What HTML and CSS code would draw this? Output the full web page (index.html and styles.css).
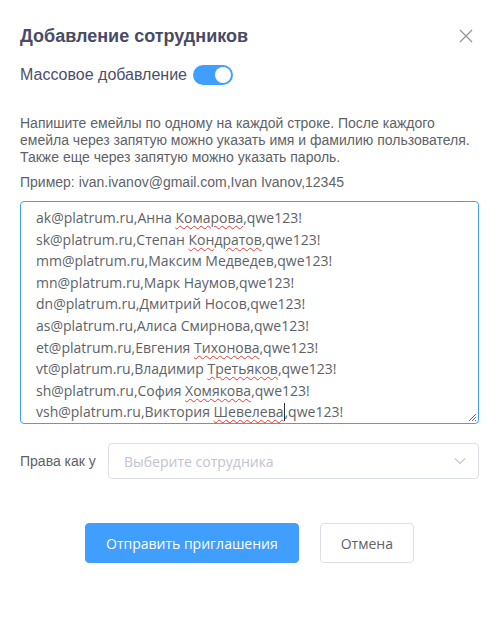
FILE: index.html
```html
<!DOCTYPE html>
<html lang="ru">
<head>
<meta charset="utf-8">
<link rel="stylesheet" href="styles.css">
</head>
<body>
<div class="dialog">
  <div class="header">
    <h2 class="title">Добавление сотрудников</h2>
    <svg class="close" width="14" height="14" viewBox="0 0 14 14"><path d="M1 1L13 13M13 1L1 13" stroke="#909399" stroke-width="1.2" fill="none"/></svg>
  </div>
  <div class="mass">
    <span>Массовое добавление</span>
    <span class="switch"><span class="knob"></span></span>
  </div>
  <p class="hint">Напишите емейлы по одному на каждой строке. После каждого емейла через запятую можно указать имя и фамилию пользователя. Также еще через запятую можно указать пароль.</p>
  <p class="example">Пример: ivan.ivanov@gmail.com,Ivan Ivanov,12345</p>
  <div class="textarea">
    <div>ak@platrum.ru,Анна <span class="sp">Комарова</span>,qwe123!</div>
    <div>sk@platrum.ru,Степан <span class="sp">Кондратов</span>,qwe123!</div>
    <div>mm@platrum.ru,Максим Медведев,qwe123!</div>
    <div>mn@platrum.ru,Марк Наумов,qwe123!</div>
    <div>dn@platrum.ru,Дмитрий Носов,qwe123!</div>
    <div>as@platrum.ru,Алиса Смирнова,qwe123!</div>
    <div>et@platrum.ru,Евгения <span class="sp">Тихонова</span>,qwe123!</div>
    <div>vt@platrum.ru,Владимир <span class="sp">Третьяков</span>,qwe123!</div>
    <div>sh@platrum.ru,София <span class="sp">Хомякова</span>,qwe123!</div>
    <div>vsh@platrum.ru,Виктория <span class="sp">Шевелева</span><span class="caret"></span>,qwe123!</div>
    <svg class="resize" width="9" height="9" viewBox="0 0 9 9"><path d="M8 1L1 8M8 4L4 8M8 7L7 8" stroke="#606266" stroke-width="1" fill="none"/></svg>
  </div>
  <div class="rights">
    <span class="rights-label">Права как у</span>
    <div class="select">
      <span class="placeholder">Выберите сотрудника</span>
      <svg width="12" height="8" viewBox="0 0 12 8"><path d="M1 1.5L6 6.5L11 1.5" stroke="#c0c4cc" stroke-width="1.1" fill="none"/></svg>
    </div>
  </div>
  <div class="actions">
    <button class="btn primary">Отправить приглашения</button>
    <button class="btn">Отмена</button>
  </div>
</div>
</body>
</html>
```
FILE: styles.css
```css
html, body {
  margin: 0;
  padding: 0;
  background: #fff;
}
.dialog {
  padding: 25px 20px 0 20px;
  font-family: "Liberation Sans", Arial, sans-serif;
  color: #606266;
}
.header {
  display: flex;
  justify-content: space-between;
  align-items: center;
  height: 22px;
}
.title {
  margin: 0;
  font-size: 18px;
  font-weight: bold;
  color: #474b66;
  line-height: 22px;
}
.close {
  margin-right: 6px;
}
.mass {
  display: flex;
  align-items: center;
  gap: 6px;
  margin-top: 18px;
  font-size: 16px;
  color: #4b4f6b;
  height: 20px;
}
.switch {
  position: relative;
  width: 40px;
  height: 20px;
  border-radius: 10px;
  background: #409eff;
  display: inline-block;
}
.knob {
  position: absolute;
  top: 2px;
  right: 2px;
  width: 16px;
  height: 16px;
  border-radius: 50%;
  background: #fff;
}
.hint {
  margin: 30px 0 0 0;
  font-size: 14px;
  line-height: 17px;
}
.example {
  margin: 8px 0 0 0;
  font-size: 14px;
  line-height: 17px;
}
.textarea {
  position: relative;
  margin-top: 10px;
  height: 211px;
  border: 1px solid #409eff;
  border-radius: 4px;
  padding: 5px 15px 5px 15px;
  font-family: "Open Sans", sans-serif;
  font-size: 14px;
  line-height: 21.6px;
  color: #606266;
}
.sp {
  text-decoration: underline wavy #e53935;
  text-decoration-thickness: 1px;
  text-underline-offset: 2px;
}
.caret {
  display: inline-block;
  width: 1px;
  height: 18px;
  background: #303133;
  vertical-align: -4px;
}
.resize {
  position: absolute;
  right: 1px;
  bottom: 1px;
}
.rights {
  display: flex;
  align-items: center;
  margin-top: 19px;
}
.rights-label {
  width: 88px;
  font-size: 14px;
  color: #606266;
}
.select {
  flex: 1;
  height: 34px;
  border: 1px solid #dcdfe6;
  border-radius: 4px;
  display: flex;
  align-items: center;
  justify-content: space-between;
  padding: 0 12px 0 15px;
  font-family: "Open Sans", sans-serif;
  font-size: 14px;
}
.placeholder {
  color: #c0c4cc;
}
.actions {
  display: flex;
  justify-content: center;
  gap: 21px;
  margin-top: 44px;
}
.btn {
  height: 40px;
  padding: 0 20px;
  border: 1px solid #dcdfe6;
  border-radius: 4px;
  background: #fff;
  font-family: "Open Sans", sans-serif;
  font-size: 14px;
  color: #606266;
}
.primary {
  background: #409eff;
  border-color: #409eff;
  color: #fff;
}
```
